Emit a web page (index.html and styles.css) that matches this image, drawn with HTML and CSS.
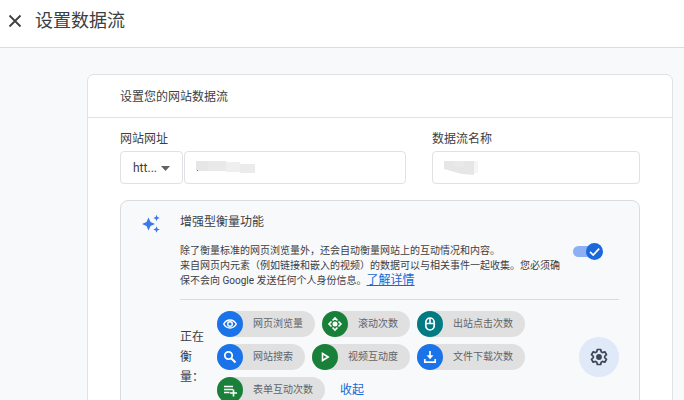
FILE: index.html
```html
<!DOCTYPE html>
<html lang="zh-CN">
<head>
  <meta charset="UTF-8">
  <title>设置数据流</title>
  <link rel="stylesheet" href="styles.css">
</head>
<body>
  <header class="topbar">
    <button class="close" type="button" aria-label="关闭">
      <svg width="14" height="14" viewBox="0 0 14 14"><path d="M1.500 1.500l11 11M12.500 1.500l-11 11" stroke="#3c4043" stroke-width="1.8" fill="none"/></svg>
    </button>
    <h1>设置数据流</h1>
  </header>

  <main class="card">
    <h2 class="card-title">设置您的网站数据流</h2>
    <form class="card-body">
      <div class="fields">
        <div class="field url-field">
          <label for="url">网站网址</label>
          <div class="url-row">
            <div class="control protocol">
              <select aria-label="协议">
                <option>htt...</option>
              </select>
              <svg class="arrow" width="9" height="5" viewBox="0 0 9 5"><path d="M0 0h9L4.500 5z" fill="#5f6368"/></svg>
            </div>
            <div class="control url">
              <input type="text" id="url">
              <svg class="mask" width="60" height="14" viewBox="0 0 60 14">
                <path d="M0 1h12v10H0z" fill="#e6e6e6"/><path d="M12 1h18v10H12z" fill="#e9e9e9"/>
                <path d="M30 2h14v10H30z" fill="#efefef"/><path d="M44 4h15v9H44z" fill="#ebebeb"/>
                <path d="M1 10h1v1H1z" fill="#777"/>
              </svg>
            </div>
          </div>
        </div>
        <div class="field name-field">
          <label for="name">数据流名称</label>
          <div class="control">
            <input type="text" id="name">
            <svg class="mask" width="36" height="17" viewBox="0 0 36 17">
              <path d="M0 1h30v14l-12-1-18-5z" fill="#e6e6e6"/><path d="M10 1h10v6H10z" fill="#e9e9e9"/><path d="M30 1h4v12h-4z" fill="#f5f5f5"/>
            </svg>
          </div>
        </div>
      </div>

      <section class="enhanced">
        <svg class="sparkle" width="20" height="20" viewBox="0 0 20 20" fill="#3c78e8">
          <path d="M7.500 3.500l2 4.500 4.500 2-4.500 2-2 4.500-2-4.500L1 10l4.500-2z"/>
          <path d="M15.500.8l.9 2.300 2.300.9-2.300.9-.9 2.300-.9-2.300-2.300-.9 2.300-.9z"/>
          <path d="M15.500 12.300l.9 2.300 2.300.9-2.300.9-.9 2.300-.9-2.300-2.300-.9 2.300-.9z"/>
        </svg>
        <div class="content">
          <h3>增强型衡量功能</h3>
          <div class="intro">
            <p>除了衡量标准的网页浏览量外，还会自动衡量网站上的互动情况和内容。<br>来自网页内元素（例如链接和嵌入的视频）的数据可以与相关事件一起收集。您必须确保不会向 Google 发送任何个人身份信息。<a href="#">了解详情</a></p>
            <label class="switch">
              <input type="checkbox" checked aria-label="增强型衡量功能">
              <svg class="thumb" width="17" height="17" viewBox="0 0 17 17"><circle cx="8.500" cy="8.500" r="8.500" fill="#1a68dc"/><path d="M4 8.800l3.200 3.200 6-6.400" stroke="#fff" stroke-width="1.700" fill="none"/></svg>
            </label>
          </div>

          <div class="measuring">
            <span class="measuring-label">正在<br>衡<br>量：</span>
            <div class="chips">
              <span class="chip">
                <span class="dot blue"><svg viewBox="0 0 16 16"><path d="M1.700 8Q4 4 8 4t6.300 4Q12 12 8 12T1.700 8z" fill="none" stroke="#fff" stroke-width="1.500"/><circle cx="8" cy="8" r="2.300" fill="none" stroke="#fff" stroke-width="1.400"/></svg></span>
                网页浏览量
              </span>
              <span class="chip">
                <span class="dot green"><svg viewBox="0 0 16 16"><path d="M5.500 4.500L8 2l2.500 2.500M11.500 5.500L14 8l-2.500 2.500M10.500 11.500L8 14l-2.500-2.500M4.500 10.500L2 8l2.500-2.500" fill="none" stroke="#fff" stroke-width="1.600"/><circle cx="8" cy="8" r="2.500" fill="#fff"/></svg></span>
                滚动次数
              </span>
              <span class="chip">
                <span class="dot teal"><svg viewBox="0 0 16 16"><rect x="3.800" y="2" width="8.400" height="12" rx="4.200" fill="none" stroke="#fff" stroke-width="1.700"/><path d="M4 7.500h8M8 2v5.500" stroke="#fff" stroke-width="1.600"/></svg></span>
                出站点击次数
              </span>
              <span class="chip">
                <span class="dot blue"><svg viewBox="0 0 16 16"><circle cx="6.500" cy="6.500" r="3.700" fill="none" stroke="#fff" stroke-width="1.800"/><path d="M9.200 9.200l4.300 4.300" stroke="#fff" stroke-width="2.100"/></svg></span>
                网站搜索
              </span>
              <span class="chip">
                <span class="dot green"><svg viewBox="0 0 16 16"><path d="M5.500 4.500v7L11.200 8z" fill="none" stroke="#fff" stroke-width="1.600"/></svg></span>
                视频互动度
              </span>
              <span class="chip">
                <span class="dot blue"><svg viewBox="0 0 16 16"><path d="M8 2v6M2.800 10v3.200h10.400V10" fill="none" stroke="#fff" stroke-width="1.700"/><path d="M4.500 6.300h7L8 10.200z" fill="#fff"/></svg></span>
                文件下载次数
              </span>
              <span class="chip">
                <span class="dot green"><svg viewBox="0 0 16 16"><path d="M2 4.500h9M2 7.500h9M2 10.500h5.500M11.500 7.500v7M8 11h7" stroke="#fff" stroke-width="1.600"/></svg></span>
                表单互动次数
              </span>
              <button class="collapse" type="button">收起</button>
            </div>
            <button class="settings" type="button" aria-label="设置">
              <svg width="18" height="18" viewBox="0 0 18 18"><path d="M7.300 1.500h3.400l.5 2.300 1.300.8 2.300-.8 1.700 2.900-1.800 1.600v1.400l1.800 1.600-1.700 2.900-2.300-.8-1.300.8-.5 2.300H7.300l-.5-2.300-1.300-.8-2.300.8-1.700-2.900 1.800-1.600V8.300L1.500 6.700l1.700-2.900 2.300.8 1.300-.8z" fill="none" stroke="#3c4654" stroke-width="1.700" stroke-linejoin="round"/><circle cx="9" cy="9" r="2.900" fill="#3c4654"/></svg>
            </button>
          </div>
        </div>
      </section>
    </form>
  </main>
</body>
</html>
```
FILE: styles.css
```css
* {
  box-sizing: border-box;
}

body {
  margin: 0;
  height: 100vh;
  overflow: hidden;
  background: #f8f9fb;
  color: #3c4043;
  font-family: Roboto, "Noto Sans CJK SC", sans-serif;
  font-size: 12px;
  line-height: 20px;
}

h1, h2, h3, p {
  margin: 0;
  font-weight: normal;
}

button {
  padding: 0;
  border: none;
  background: none;
  font: inherit;
  cursor: pointer;
}

.topbar {
  display: flex;
  align-items: center;
  gap: 13px;
  height: 48px;
  padding: 0 8px 6px;
  background: #fff;
  border-bottom: 1px solid #dadce0;
}

.close {
  display: flex;
}

h1 {
  font-size: 18px;
}

.card {
  margin: 26px 11px 0 87px;
  background: #fff;
  border: 1px solid #dfe1e5;
  border-radius: 7px;
}

.card-title {
  padding: 12px 32px 10px;
  border-bottom: 1px solid #dfe1e5;
  font-size: 12px;
}

.card-body {
  padding: 11px 32px 0;
}

.fields {
  display: flex;
  gap: 26px;
}

.field label {
  display: block;
  margin-bottom: 2px;
}

.url-field {
  flex: 11;
}

.name-field {
  flex: 8;
}

.url-row {
  display: flex;
  gap: 1px;
}

.control {
  position: relative;
}

.protocol {
  flex: none;
  width: 63px;
}

.url {
  flex: 1;
}

.control input,
.control select {
  display: block;
  width: 100%;
  height: 33px;
  padding: 0 12px;
  background: #fff;
  border: 1px solid #dfe1e5;
  border-radius: 4px;
  color: #3c4043;
  font: inherit;
  appearance: none;
}

.arrow {
  position: absolute;
  right: 13px;
  top: 15px;
  pointer-events: none;
}

.mask {
  position: absolute;
  left: 12px;
  top: 9px;
}

.enhanced {
  display: flex;
  gap: 19px;
  margin-top: 16px;
  padding: 11px 20px 20px;
  background: #f8f9fb;
  border: 1px solid #dadce0;
  border-radius: 8px;
}

.sparkle {
  flex: none;
  margin-top: 2px;
}

.content {
  flex: 1;
}

h3 {
  font-size: 12px;
}

.intro {
  display: flex;
  justify-content: space-between;
  padding: 11px 16px 11px 0;
  border-bottom: 1px solid #dadce0;
}

.intro p {
  width: 385px;
  font-size: 10px;
  line-height: 15px;
}

.intro a {
  color: #1967d2;
  font-size: 12px;
}

.switch {
  position: relative;
  flex: none;
  width: 30px;
  height: 17px;
}

.switch input {
  display: block;
  width: 28px;
  height: 11px;
  margin: 3px 0;
  background: #8cb0f3;
  border-radius: 6px;
  appearance: none;
}

.thumb {
  position: absolute;
  top: 0;
  right: 0;
}

.measuring {
  display: flex;
  align-items: center;
  padding-top: 11px;
}

.measuring-label {
  flex: none;
  width: 37px;
}

.chips {
  display: flex;
  flex-wrap: wrap;
  gap: 7px;
  width: 320px;
}

.chip {
  display: flex;
  align-items: center;
  gap: 10px;
  height: 26px;
  padding-right: 12px;
  background: #e0e0e0;
  border-radius: 13px;
  color: #5f6368;
  font-size: 10px;
}

.dot {
  display: flex;
  align-items: center;
  justify-content: center;
  width: 26px;
  height: 26px;
  border-radius: 50%;
}

.dot svg {
  width: 16px;
  height: 16px;
}

.blue {
  background: #1a73e8;
}

.green {
  background: #188038;
}

.teal {
  background: #007b83;
}

.collapse {
  margin-left: 8px;
  color: #1967d2;
}

.settings {
  display: flex;
  align-items: center;
  justify-content: center;
  width: 40px;
  height: 40px;
  margin-left: auto;
  background: #dfe9f8;
  border-radius: 50%;
}
```
